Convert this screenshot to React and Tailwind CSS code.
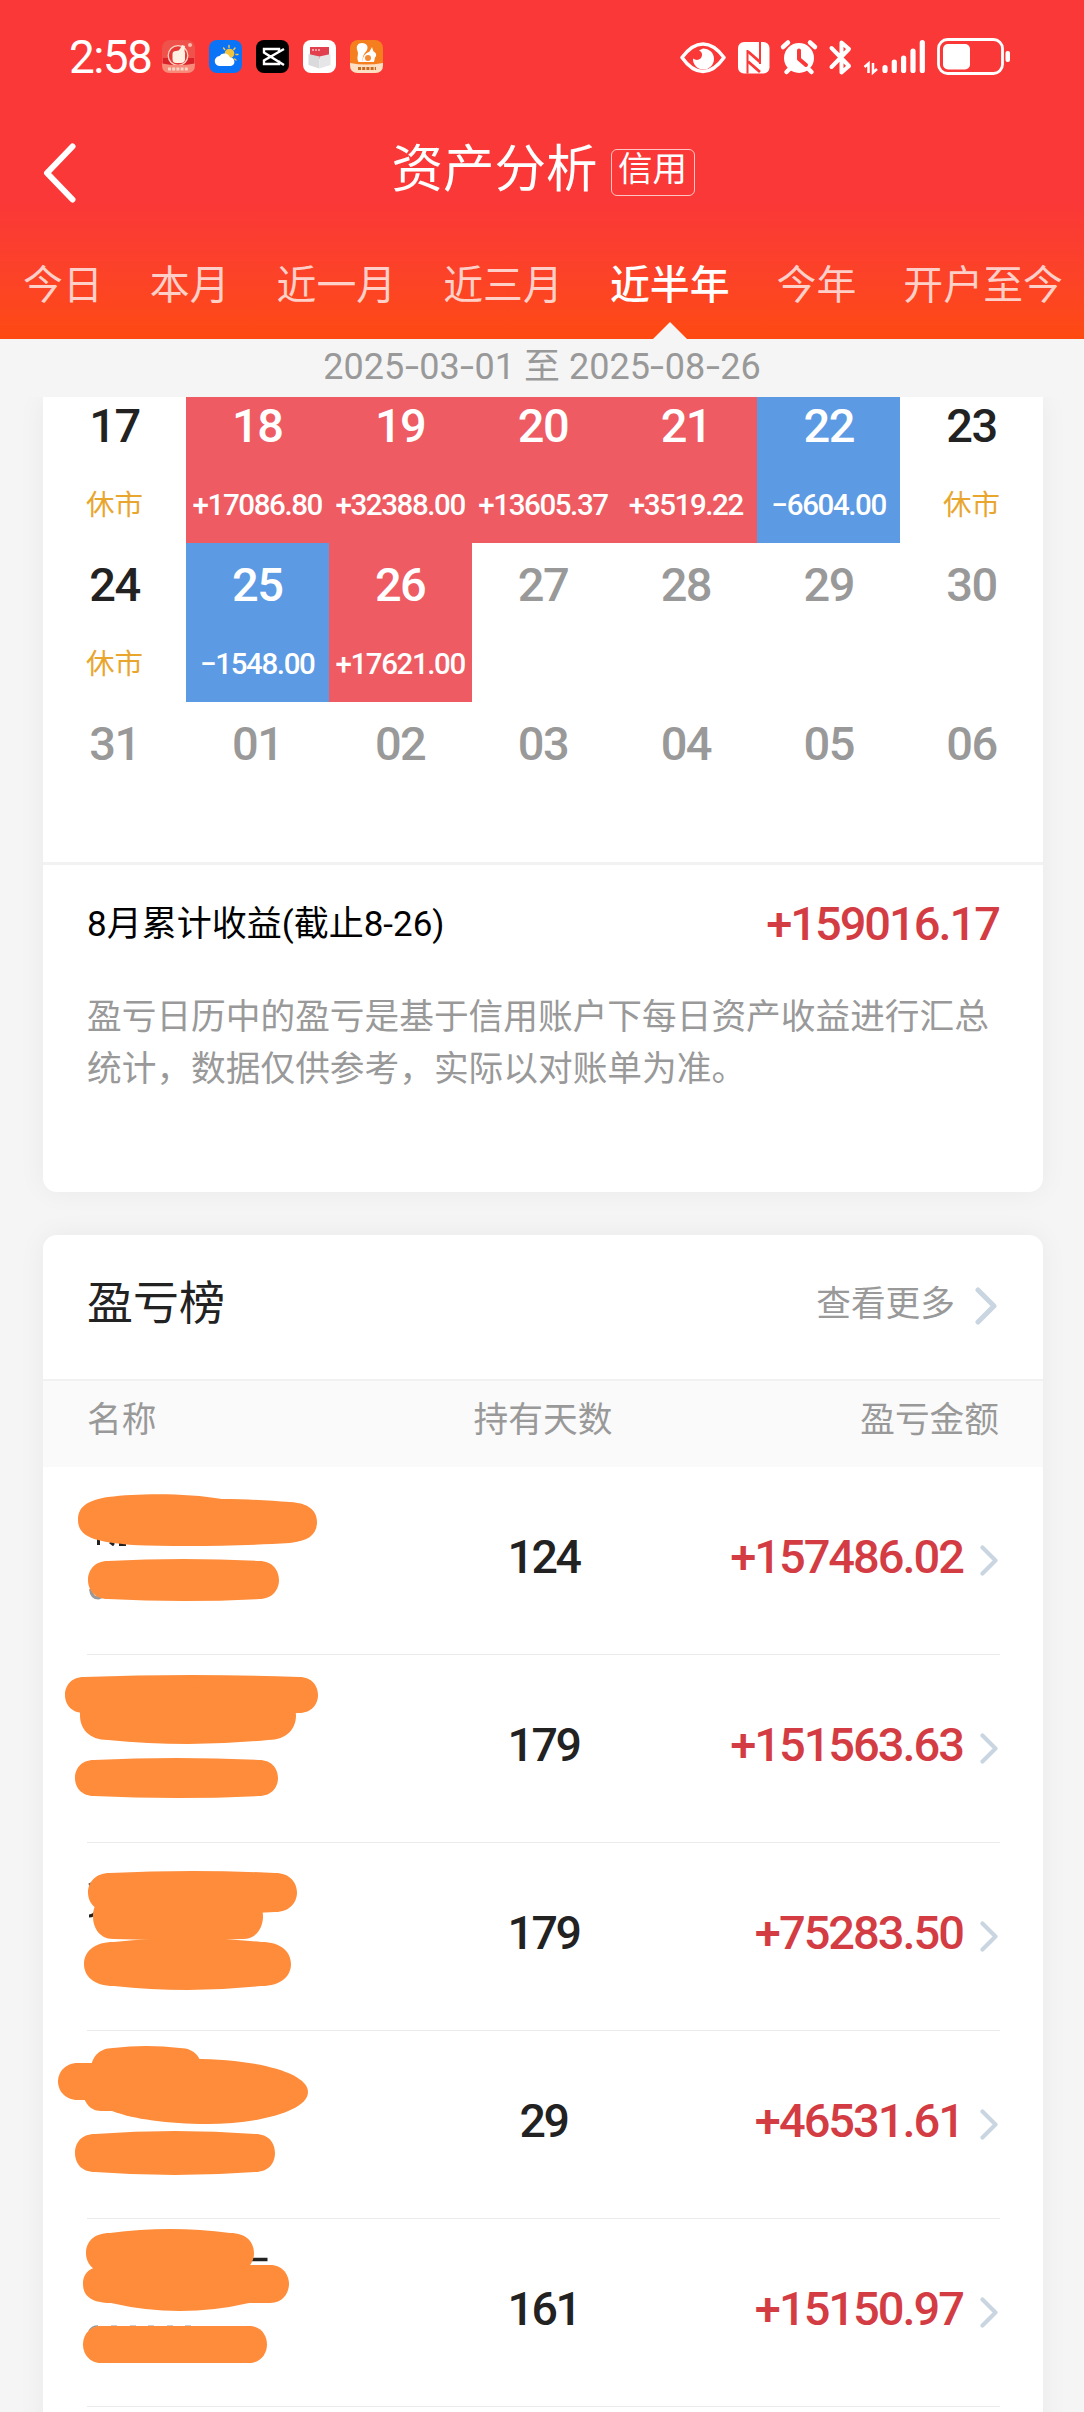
const NUM = "font-[Roboto,'Noto_Sans_CJK_SC',sans-serif]";

const tabs = ["今日", "本月", "近一月", "近三月", "近半年", "今年", "开户至今"];
const activeTab = "近半年";

const days = [
  { day: "17", note: "休市", type: "closed" },
  { day: "18", note: "+17086.80", type: "up" },
  { day: "19", note: "+32388.00", type: "up" },
  { day: "20", note: "+13605.37", type: "up" },
  { day: "21", note: "+3519.22", type: "up" },
  { day: "22", note: "-6604.00", type: "down" },
  { day: "23", note: "休市", type: "closed" },
  { day: "24", note: "休市", type: "closed" },
  { day: "25", note: "-1548.00", type: "down" },
  { day: "26", note: "+17621.00", type: "up" },
  { day: "27", type: "none" },
  { day: "28", type: "none" },
  { day: "29", type: "none" },
  { day: "30", type: "none" },
  { day: "31", type: "none" },
  { day: "01", type: "none" },
  { day: "02", type: "none" },
  { day: "03", type: "none" },
  { day: "04", type: "none" },
  { day: "05", type: "none" },
  { day: "06", type: "none" },
];

const cellStyle = {
  up: "bg-[#ee5b62] text-white",
  down: "bg-[#5c9ae4] text-white",
  closed: "text-[#222]",
  none: "text-[#999]",
};

// masks: [x1, x2, y1, y2, bulge, corner] or a ready path
const rows = [
  {
    days: "124",
    amount: "+157486.02",
    masks: [
      "M35 53C35 38 47 33 65 30C97 26 145 26 179 32C207 32 227 34 247 35C265 36 274 43 274 55C274 68 265 74 247 76C197 79 137 80 90 78C52 75 35 70 35 53Z",
      [45, 236, 92, 134, 2, 20],
    ],
    marks: (
      <>
        <path d="M55.500 70v8M67 75l4 3M76 77.500h7" stroke="#222" strokeWidth="3" />
        <path d="M47.500 122q1 9 8 9l5-2" stroke="#999" strokeWidth="3" fill="none" />
      </>
    ),
  },
  {
    days: "179",
    amount: "+151563.63",
    masks: [
      [22, 275, 20, 60, 2, 19],
      [37, 253, 32, 89, 4, 28],
      [32, 235, 103, 143, 2, 19],
    ],
  },
  {
    days: "179",
    amount: "+75283.50",
    masks: [
      [45, 254, 28, 71, 2, 22],
      [50, 220, 50, 97, 1, 20],
      [41, 248, 95, 147, 4, 30],
    ],
    marks: (
      <>
        <path d="M46 42l4-2" stroke="#555" strokeWidth="3" />
        <path d="M46 73q5 0 8-6" stroke="#222" strokeWidth="3" fill="none" />
      </>
    ),
  },
  {
    days: "29",
    amount: "+46531.61",
    masks: [
      [48, 159, 15, 62, 2, 22],
      [15, 120, 32, 69, 0, 20],
      [40, 130, 40, 80, 0, 18],
      "M150 28C215 28 265 42 265 61C265 80 215 93 164 93C125 93 90 88 69 80L100 35Z",
      [32, 232, 100, 144, 3, 20],
    ],
  },
  {
    days: "161",
    amount: "+15150.97",
    masks: [
      [43, 211, 10, 58, 4, 24],
      [40, 234, 38, 92, 8, 28],
      [110, 246, 46, 84, 0, 19],
      [40, 224, 107, 144, 0, 18],
    ],
    marks: (
      <>
        <path d="M205 40.500h19.500" stroke="#222" strokeWidth="3.500" />
        <path d="M46 112q3-5 9-5M68 107.300h6M87 107.300h6M105 107.300h6M124 107.300h6M142 107.300h6" stroke="#999" strokeWidth="1.500" fill="none" />
      </>
    ),
  },
];

// Marker stroke outline: a pill whose long edges swell slightly
const markerPath = ([x1, x2, y1, y2, b, c]) => {
  const xm = (x1 + x2) / 2;
  const ym = (y1 + y2) / 2;
  const k = (y2 - y1) * 0.22;
  const t = y1 + b;
  const u = y2 - b;
  return `M${x1} ${ym}C${x1} ${ym - k} ${x1 + c * 0.3} ${t} ${x1 + c} ${t}Q${xm} ${y1 - b} ${x2 - c} ${t}C${x2 - c * 0.3} ${t} ${x2} ${ym - k} ${x2} ${ym}C${x2} ${ym + k} ${x2 - c * 0.3} ${u} ${x2 - c} ${u}Q${xm} ${y2 + b} ${x1 + c} ${u}C${x1 + c * 0.3} ${u} ${x1} ${ym + k} ${x1} ${ym}Z`;
};

const Chevron = ({ className }) => (
  <svg className={className} viewBox="0 0 22 38" fill="none">
    <path
      d="M3 3L19 19L3 35"
      stroke="#c9d5e1"
      strokeWidth="5"
      strokeLinecap="round"
      strokeLinejoin="round"
    />
  </svg>
);

const AppIcons = () => (
  <div className="flex gap-[14px]">
    <svg className="size-[33px]" viewBox="0 0 33 33">
      <rect width="33" height="33" rx="8" fill="#ee524b" />
      <path d="M1 18h31v7q-16 3-31 0z" fill="#d9232a" />
      <circle cx="16" cy="15.500" r="9.800" fill="#e53a38" stroke="#fbd3c4" strokeWidth="1.300" />
      <path d="M10.500 14q0-3 3.500-3 3 0 4-2l2-4 3 1-.5 5q1 2 .5 4v5q-1 3-4 3h-5q-3.500 0-3.500-4z" fill="#fff0e4" />
      <circle cx="28" cy="5" r="2" fill="#fbb9ab" />
      <path d="M0 23.500q16 3 33 0V25q0 8-8 8H8q-8 0-8-8z" fill="#f78a78" />
      <path d="M6 29h21" stroke="#fbd3c4" strokeWidth="3" strokeDasharray="3 1.200" />
    </svg>
    <svg className="size-[33px]" viewBox="0 0 33 33">
      <rect width="33" height="33" rx="8" fill="#0b74f6" />
      <path
        d="M20 5.500v2M14.500 8l1.200 1.500M26 8l-1.200 1.500M27 14.500h2M25.500 19l1.500 1"
        stroke="#f2c94f"
        strokeWidth="1.400"
        strokeLinecap="round"
      />
      <circle cx="20.500" cy="13.500" r="4.800" fill="#f2c43d" />
      <path d="M11 26a5 5 0 0 1-.5-10 6 6 0 0 1 10.500 1.500 4.300 4.300 0 0 1 1 8.500z" fill="#fff" />
    </svg>
    <svg className="size-[33px]" viewBox="0 0 33 33">
      <rect width="33" height="33" rx="8" fill="#000" />
      <path
        d="M28 9L8 20.500V24H23V20.500M28 25L8 12.500V9H23V12.500"
        fill="none"
        stroke="#fff"
        strokeWidth="2.400"
      />
    </svg>
    <svg className="size-[33px]" viewBox="0 0 33 33">
      <rect width="33" height="33" rx="8" fill="#fff" />
      <path d="M7 7h19v9l-9.500 3L7 16z" fill="#e2404f" />
      <path d="M5.500 14l11 2.500v12l-11-3.500z" fill="#dadadd" />
      <path d="M27.500 14l-11 2.500v12l11-3.500z" fill="#e6e6e8" />
      <path d="M9 10h9" stroke="#fbb" strokeWidth="1.500" strokeDasharray="2 1" />
    </svg>
    <svg className="size-[33px]" viewBox="0 0 33 33">
      <rect width="33" height="33" rx="8" fill="#f57e1f" />
      <path d="M8.500 22C6 17 9 15 7.500 11 5.500 6 8 3 12 3c5 0 7 4 4.500 8-2.500 3-4.500 5-3.500 11z" fill="#fff" />
      <path d="M13 22c-1-6 3-9 6.500-10.500L22 7l1.500 4.500c3 1.500 3.500 4 1.500 6l-1 4.500z" fill="#fff" />
      <circle cx="18" cy="18" r="3" fill="#f58a35" />
      <path d="M0 23q16 3 33 0v2q0 8-8 8H8q-8 0-8-8z" fill="#fde0c4" />
      <path d="M8 28.500h18" stroke="#c56a20" strokeWidth="3" strokeDasharray="3 1.200" />
    </svg>
  </div>
);

const StatusIcons = () => (
  <svg className="w-[332px] h-[40px]" viewBox="680 36 332 40" fill="none">
    {/* eye */}
    <path
      d="M682 56.500C689 47 696 43 703 43s14 4 21 13.500C717 66.500 710 70.500 703 70.500s-14-4-21-14z"
      stroke="#fff"
      strokeWidth="3.500"
      strokeLinejoin="round"
    />
    <path d="M703 47.500a10.500 10.500 0 1 1-10 10c4 3 9 1 9-4 0-2-1-3-3-4z" fill="#fff" />
    {/* nfc */}
    <rect x="738" y="41" width="31.500" height="31.500" rx="6" fill="#fff" />
    <path d="M747.500 49V72.500M760 41V63" stroke="#fa3837" strokeWidth="2" />
    <path d="M748 50.500L760 61M748 60.500L760 71" stroke="#fa3837" strokeWidth="2.800" />
    {/* alarm */}
    <circle cx="799" cy="57" r="15" fill="#fff" />
    <path d="M783 46l5-4.500M815 46l-5-4.500M786.500 71l4-4M811.500 71l-4-4" stroke="#fff" strokeWidth="4.500" strokeLinecap="round" />
    <path d="M799 49.500v8.500l7 6" stroke="#fa3837" strokeWidth="4" strokeLinecap="round" strokeLinejoin="round" />
    {/* bluetooth */}
    <path
      d="M831.500 47L849 65l-7.500 6.500V41.500L849 48L831.500 66"
      stroke="#fff"
      strokeWidth="4"
      strokeLinecap="round"
      strokeLinejoin="round"
    />
    {/* signal */}
    <path d="M864.500 66l4-3.500V72M873 62v9.500l4-3.500" stroke="#fff" strokeWidth="2.500" />
    <path d="M885 66.500v3M894.300 61v8.500M903.600 57v12.500M913 50v19.500M922.300 41.500v28" stroke="#fff" strokeWidth="5.200" strokeLinecap="round" />
    {/* battery */}
    <rect x="938.500" y="38.500" width="64" height="34" rx="9" stroke="#fff" strokeWidth="2.800" />
    <rect x="943" y="43" width="27" height="25.500" rx="5" fill="#fff" />
    <rect x="1005.500" y="50" width="4.500" height="11" rx="2" fill="#fff" />
  </svg>
);

const Header = () => (
  <header className="h-[339px] flex flex-col bg-linear-to-b from-[#fa3837] from-60% to-[#fe4a10] text-white">
    <div className="h-[113px] pl-[69px] pr-[72px] flex items-center justify-between">
      <div className="flex items-center gap-[11px]">
        <span className="text-[46px] tracking-[-1.600px] leading-none font-[Roboto,sans-serif]">2:58</span>
        <AppIcons />
      </div>
      <StatusIcons />
    </div>

    <div className="h-[120px] grid grid-cols-[120px_1fr_120px] items-center">
      <svg className="ml-[43px] w-[34px] h-[60px]" viewBox="0 0 34 60" fill="none">
        <path d="M29.500 3.500L4 30L29.500 56.500" stroke="#fff" strokeWidth="6" strokeLinecap="round" strokeLinejoin="round" />
      </svg>
      <div className="flex items-center justify-center pl-[2px] pb-[17px]">
        <h1 className="text-[51.500px] leading-none">资产分析</h1>
        <span className="ml-[13px] mt-[16px] h-[47px] w-[84px] rounded-md border border-white/70 text-center text-[34.500px] leading-[33px]">
          信用
        </span>
      </div>
    </div>

    <nav className="flex-1 flex items-start justify-between pl-[23px] pr-[21px] pt-[19px]">
      {tabs.map((tab) => (
        <div
          key={tab}
          className={
            tab === activeTab
              ? "relative h-[87px] text-[39.900px] leading-[60px] font-medium"
              : "text-[39.900px] leading-[60px] text-white/75"
          }
        >
          {tab}
          {tab === activeTab && (
            <span className="absolute bottom-0 left-1/2 -translate-x-1/2 border-x-[17px] border-b-[17px] border-x-transparent border-b-[#f5f5f5]" />
          )}
        </div>
      ))}
    </nav>
  </header>
);

const Dash = () => <span className="inline-block scale-x-140 mx-[2.500px]">-</span>;

const DateText = ({ value }) => {
  const [y, m, d] = value.split("-");
  return (
    <span>
      {y}
      <Dash />
      {m}
      <Dash />
      {d}
    </span>
  );
};

const DayCell = ({ day, note, type }) => (
  <div className={`h-[159px] flex flex-col items-center pt-[17px] ${cellStyle[type]}`}>
    <span className={`text-[47px] leading-[50px] tracking-[-1.500px] font-medium ${NUM}`}>{day}</span>
    {type === "closed" ? (
      <span className="mt-[31px] text-[28.500px] leading-[42px] text-[#e9a62f]">{note}</span>
    ) : (
      <span className={`mt-[36px] text-[29.500px] leading-[36px] tracking-[-1.400px] font-medium whitespace-nowrap ${NUM}`}>
        {note?.replace("-", "−")}
      </span>
    )}
  </div>
);

const CalendarCard = () => (
  <section className="ml-[43px] mr-[41px] bg-white rounded-b-[14px] shadow-[0_0_28px_rgba(0,0,0,0.05)]">
    {/* first week is scrolled partly under the date bar */}
    <div className="h-[465px] pb-[1px] flex flex-col justify-end overflow-hidden">
      <div className="grid grid-cols-7 shrink-0">
        {days.map((item) => (
          <DayCell key={item.day} {...item} />
        ))}
      </div>
    </div>
    <div className="border-t-[3px] border-[#f2f2f2] h-[330px] px-[44px] pt-[27px]">
      <div className="flex items-center justify-between h-[64px]">
        <span className={`pt-[3px] text-[35px] text-black ${NUM}`}>8月累计收益(截止8-26)</span>
        <span className={`text-[47px] tracking-[-2px] font-medium text-[#d43c44] ${NUM}`}>+159016.17</span>
      </div>
      <p className="mt-[32px] text-[34.700px] leading-[52px] text-[#999]">
        盈亏日历中的盈亏是基于信用账户下每日资产收益进行汇总统计，数据仅供参考，实际以对账单为准。
      </p>
    </div>
  </section>
);

const RankRow = ({ days, amount, masks, marks }) => (
  <li className="h-[188px] pl-[44px] pr-[43px]">
    <div className="h-full border-b-[1.500px] border-[#ebebeb] flex items-center">
      <svg className="-ml-[44px] w-[344px] h-[188px] shrink-0" viewBox="0 0 344 188">
        {marks}
        {masks.map((mask, i) => (
          <path key={i} d={typeof mask === "string" ? mask : markerPath(mask)} fill="#ff8c3a" />
        ))}
      </svg>
      <span className={`w-[313px] pb-[6px] text-center text-[46.500px] tracking-[-2.500px] font-medium text-[#222] ${NUM}`}>
        {days}
      </span>
      <div className="flex-1 flex items-center justify-end">
        <span className={`pb-[6px] text-[47px] tracking-[-2px] font-medium text-[#d43c44] ${NUM}`}>{amount}</span>
        <Chevron className="ml-[17px] mr-[2px] w-[18px] h-[31px]" />
      </div>
    </div>
  </li>
);

const RankCard = () => (
  <section className="mt-[43px] ml-[43px] mr-[41px] pb-10 bg-white rounded-t-[14px] shadow-[0_0_28px_rgba(0,0,0,0.05)]">
    <div className="h-[144px] px-[44px] pb-[12px] flex items-center justify-between">
      <h2 className="-mt-[3px] text-[46px] text-[#222]">盈亏榜</h2>
      <div className="flex items-center text-[34.700px] text-[#999]">
        查看更多
        <Chevron className="ml-[20px] mr-[2px] mt-[11px] w-[22px] h-[38px]" />
      </div>
    </div>
    <div className="h-[88px] px-[44px] pb-[13px] grid grid-cols-3 items-center bg-[#fafafa] border-t-2 border-[#f1f1f1] text-[34.700px] text-[#999]">
      <span>名称</span>
      <span className="text-center">持有天数</span>
      <span className="text-right">盈亏金额</span>
    </div>
    <ul>
      {rows.map((row) => (
        <RankRow key={row.amount} {...row} />
      ))}
    </ul>
  </section>
);

export default function App() {
  return (
    <div className="w-[1084px] h-[2412px] overflow-hidden bg-[#f5f5f5] font-['Noto_Sans_CJK_SC',sans-serif]">
      <Header />
      <div className={`relative z-10 h-[58px] bg-[#f5f5f5] text-center text-[36px] leading-[56px] text-[#999] ${NUM}`}>
        <DateText value="2025-03-01" /> 至 <DateText value="2025-08-26" />
      </div>
      <CalendarCard />
      <RankCard />
    </div>
  );
}
